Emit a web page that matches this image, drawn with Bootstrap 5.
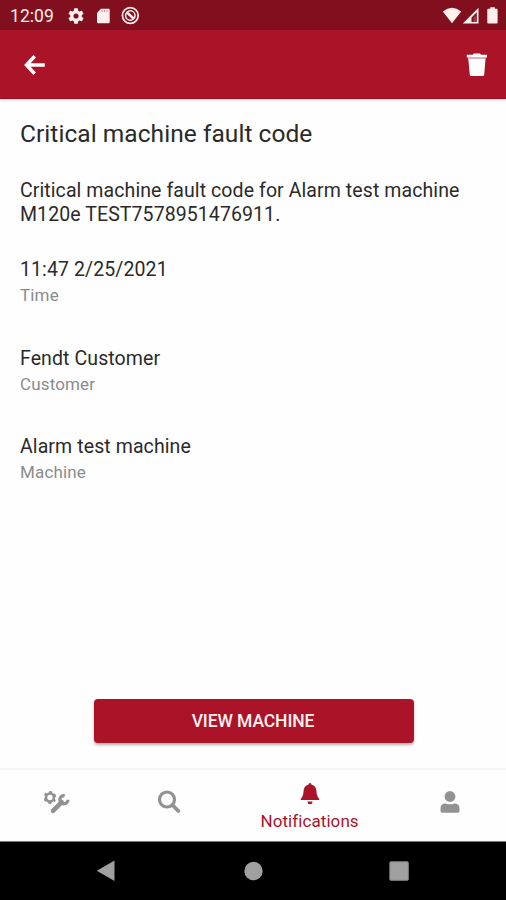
<!DOCTYPE html>
<html lang="en">
<head>
<meta charset="utf-8">
<meta name="viewport" content="width=device-width, initial-scale=1">
<title>Critical machine fault code</title>
<link href="https://cdn.jsdelivr.net/npm/bootstrap@5.3.0/dist/css/bootstrap.min.css" rel="stylesheet">
<style>
  body { font-family: Roboto, "Liberation Sans", sans-serif; color: #2a2a2a; background: #fefefe; height: 900px; }
  svg { display: block; flex: none; }
  .status-strip { height: 30px; background: #820f1e; color: #fff0ee; padding: 1px 7px 0 10px; font-size: 17.5px; line-height: 30px; }
  .clock { width: 58px; letter-spacing: .05px; }
  .status-icons { margin-left: 13px; }
  .app-head { height: 69px; background: #ab1428; border-bottom: 1px solid #9d0c1c; box-shadow: 0 1px 3px rgba(60,40,90,.22); padding: 1px 17px 0 23px; }
  .bare { border: 0; background: none; padding: 0; }
  .page-title { font-size: 24.5px; line-height: 30px; letter-spacing: .05px; margin: 20px 0 30px; font-weight: 400; }
  .detail { font-size: 19.5px; line-height: 24px; letter-spacing: .09px; }
  .facts { margin-top: 31px; letter-spacing: .1px; }
  .facts > div { height: 88.6px; }
  .facts dt { font-weight: 400; }
  .facts dd { font-size: 17px; line-height: 20px; letter-spacing: .15px; color: #8b8b8b; margin: 3px 0 0; }
  .cta { width: 320px; height: 44px; margin: 0 auto 25px 93.5px; background: #ab1428; color: #fff1f0; border: 0; border-radius: 4px; font-size: 17.5px; font-weight: 500; letter-spacing: -.1px; padding: 1px 1px 0 0; box-shadow: 0 2px 3px rgba(0,0,0,.3); }
  .tabs { height: 73px; border-top: 2px solid #f5f5f5; color: #929292; font-size: 17px; }
  .tabs a { width: 112.4px; color: inherit; text-decoration: none; }
  .tabs a.current { width: 168.6px; color: #ab1428; line-height: 20px; letter-spacing: .08px; padding: 1px 0 0 1px; }
  .sys-nav { height: 59px; background: #000; border-top: 1px solid #777; padding: 0 97px 0 96px; }
</style>
<script defer src="https://cdn.jsdelivr.net/npm/bootstrap@5.3.0/dist/js/bootstrap.bundle.min.js"></script>
</head>
<body class="d-flex flex-column overflow-hidden m-0">
  <div class="status-strip d-flex align-items-center flex-shrink-0">
    <span class="clock">12:09</span>
    <svg width="16" height="16" viewBox="2 2 20 20" fill="currentColor"><path d="M19.140 12.940c.04-.3.06-.61.06-.94s-.02-.64-.07-.94l2.030-1.580a.5.5 0 0 0 .12-.61l-1.920-3.320a.5.5 0 0 0-.59-.22l-2.390.96a7 7 0 0 0-1.620-.94l-.36-2.540a.5.5 0 0 0-.48-.41h-3.840a.5.5 0 0 0-.47.41l-.36 2.540c-.59.24-1.130.57-1.620.94l-2.390-.96a.5.5 0 0 0-.59.22L2.740 8.870a.5.5 0 0 0 .12.61l2.030 1.580a7 7 0 0 0 0 1.880l-2.030 1.580a.5.5 0 0 0-.12.61l1.920 3.320c.12.22.37.29.59.22l2.390-.96c.5.38 1.030.7 1.620.94l.36 2.540c.05.24.24.41.48.41h3.840c.24 0 .44-.17.47-.41l.36-2.540c.59-.24 1.130-.56 1.620-.94l2.390.96c.22.08.47 0 .59-.22l1.920-3.320a.5.5 0 0 0-.12-.61zM12 15.200a3.200 3.200 0 1 1 0-6.400 3.200 3.200 0 0 1 0 6.400z"/></svg>
    <svg class="status-icons" width="60" height="20" viewBox="0 0 60 20" fill="currentColor"><path d="M0 7 4 2.800h7.500q1.200 0 1.200 1.200v12q0 1.200-1.200 1.200H1.200Q0 17.200 0 16z"/><path d="M5 4v2M7.500 4v2M10 4v2" stroke="#820f1e" stroke-opacity=".45"/><g fill="none" stroke="currentColor"><circle cx="33.300" cy="9.500" r="7.900" stroke-width="1.700"/><circle cx="33.300" cy="9.500" r="4.700" stroke-width="1.500"/><path d="m30 6.500 6.500 6" stroke-width="2.400"/></g></svg>
    <svg class="ms-auto" width="57" height="18" viewBox="0 0 57 18" fill="currentColor"><path d="M.8 4.500Q10 -2.800 19.200 4.500L10 16.200z"/><path fill-rule="evenodd" d="M36.500.8V16.500H20.800zM34.800 5.200 29.500 10.500v4.500h5.300z"/><path d="M31.500 9.500h2.500V15h-2.500z" opacity=".2"/><path d="M46.300 1.700h2V.3h4.500v1.400h2q.8 0 .8.800v13q0 1-.8 1h-8.500q-1 0-1-1v-13q0-.8 1-.8z"/></svg>
  </div>

  <header class="app-head d-flex align-items-center justify-content-between flex-shrink-0">
    <button class="bare" aria-label="Back"><svg width="24" height="24" viewBox="0 0 24 24" fill="none" stroke="#fff" stroke-width="3.500"><path d="M11.700 3.200 3.500 12l8.200 8.800M3.600 12h18.200"/></svg></button>
    <button class="bare" aria-label="Delete"><svg width="24" height="26" viewBox="0 0 24 26" fill="#fff"><path d="M1.800 2.700h6l1-1.200h6.200l1 1.200h6v2.800H1.800z"/><path d="M2.900 5.500h17.800v1.800H2.900z" opacity=".65"/><path d="M3.300 7h17.200l-1.300 15.800q-.1 1.200-1.300 1.200H6q-1.100 0-1.200-1.200z"/></svg></button>
  </header>

  <main class="flex-grow-1 d-flex flex-column">
    <section class="px-3 ms-1">
      <h1 class="page-title">Critical machine fault code</h1>
      <p class="detail mb-0">Critical machine fault code for Alarm test machine<br>M120e TEST7578951476911.</p>
      <dl class="detail facts mb-0">
        <div><dt>11:47 2/25/2021</dt><dd>Time</dd></div>
        <div><dt>Fendt Customer</dt><dd>Customer</dd></div>
        <div><dt>Alarm test machine</dt><dd>Machine</dd></div>
      </dl>
    </section>
    <button class="btn cta mt-auto">VIEW MACHINE</button>
  </main>

  <nav class="tabs d-flex flex-shrink-0">
    <a href="#" class="d-flex align-items-center justify-content-center pb-2" aria-label="Service"><svg width="28" height="26" viewBox="0 0 28 26"><g fill="none" stroke="currentColor"><circle cx="8" cy="8.500" r="4" stroke-width="2.600"/><circle cx="8" cy="8.500" r="5.500" stroke-width="1.800" stroke-dasharray="3 2.760" stroke-dashoffset="1.500" transform="rotate(30 8 8.500)"/><path d="m11 21.800 8.700-8.700" stroke-width="4.600" stroke-linecap="round"/><path d="M22.700 6.700a4.100 4.100 0 1 0 3.300 4.100" stroke-width="3.200"/></g></svg></a>
    <a href="#" class="d-flex align-items-center justify-content-center pb-2" aria-label="Search"><svg width="24" height="24" viewBox="0 0 24 24" fill="none" stroke="currentColor"><circle cx="10" cy="9.500" r="7.500" stroke-width="3.200"/><path d="m15.500 15 5.800 6" stroke-width="3.800" stroke-linecap="round"/></svg></a>
    <a href="#" class="current d-flex flex-column align-items-center"><svg class="mt-2" width="22" height="32" viewBox="0 0 22 32" fill="currentColor"><path d="M11 4q1.500 0 1.600 1.700 4.700 1.200 4.900 6.800.2 5 2.700 7.300.7.900-.4 1.200H2.200q-1.100-.3-.4-1.200Q4.300 17.500 4.500 12.500q.2-5.600 4.900-6.800.1-1.700 1.600-1.700zM8.300 22.500h5.400Q13.200 25.300 11 25.300T8.300 22.500z"/></svg><span>Notifications</span></a>
    <a href="#" class="d-flex align-items-center justify-content-center pb-2" aria-label="Account"><svg width="22" height="24" viewBox="0 0 22 24" fill="currentColor"><circle cx="11" cy="6.500" r="5.400"/><path d="M1.500 21v-2.500q0-5 5-5 4.500 1.700 9 0 5 0 5 5V21q0 1.700-1.700 1.700H3.200Q1.500 22.700 1.500 21z"/></svg></a>
  </nav>

  <div class="sys-nav d-flex align-items-center justify-content-between flex-shrink-0">
    <svg width="20" height="22" viewBox="0 0 20 22" fill="#a0a0a0"><path d="M18.500.5v20.600L.8 10.800z"/></svg>
    <svg width="20" height="20" viewBox="0 0 20 20" fill="#a0a0a0"><circle cx="10.500" cy="10" r="9.200"/></svg>
    <svg width="20" height="20" viewBox="0 0 20 20"><rect x=".8" y=".8" width="18.500" height="18.500" rx="1" fill="#a0a0a0" stroke="#858585"/></svg>
  </div>
</body>
</html>
